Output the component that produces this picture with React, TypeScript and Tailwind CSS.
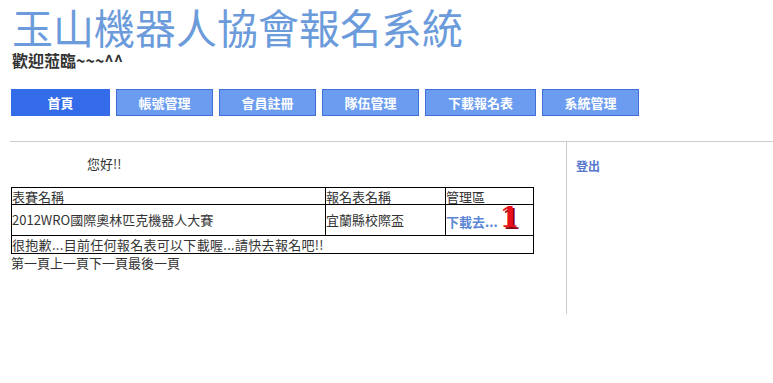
const font = "font-['Noto_Sans_CJK_TC','Liberation_Sans',sans-serif]";

const navItems = [
  { label: "首頁", w: "w-[99px]", active: true },
  { label: "帳號管理", w: "w-[97px]" },
  { label: "會員註冊", w: "w-[97px]" },
  { label: "隊伍管理", w: "w-[97px]" },
  { label: "下載報名表", w: "w-[111px]" },
  { label: "系統管理", w: "w-[97px]" },
];

export default function App() {
  return (
    <div className={`${font} h-[383px] w-[773px] overflow-hidden bg-white text-[#222]`}>
      {/* header */}
      <div className="pl-[12px] pt-[2px]">
        <h1 className="h-[48px] text-[41px] leading-[48px] font-normal text-[#6b9bdb]">
          玉山機器人協會報名系統
        </h1>
        <p className="text-[16px] leading-[20px] font-bold text-[#333]">歡迎蒞臨~~~^^</p>
      </div>

      {/* nav */}
      <nav className="mt-[19px] flex gap-[6px] pl-[11px]">
        {navItems.map((it) => (
          <div
            key={it.label}
            className={`${it.w} flex h-[27px] items-center justify-center border text-[13px] font-bold text-white ${
              it.active ? "border-[#336be8] bg-[#336be8]" : "border-[#3f6fd8] bg-[#6b9cf0]"
            }`}
          >
            {it.label}
          </div>
        ))}
      </nav>

      {/* body */}
      <div className="mt-[25px] ml-[10px] flex border-t border-[#cccccc]">
        <div className="w-[556px] pt-[14px] pl-[1px] text-[13px]">
          <p className="pl-[76px] leading-[16px] text-[#333]">您好!!</p>
          <table className="mt-[15px] w-[523px] border-collapse border border-black text-[13px] text-[#333]">
            <tbody>
              <tr className="h-[17px]">
                <td className="w-[314px] border border-black px-0 py-0 leading-[15px]">表賽名稱</td>
                <td className="w-[120px] border border-black p-0 leading-[15px]">報名表名稱</td>
                <td className="border border-black p-0 leading-[15px]">管理區</td>
              </tr>
              <tr className="h-[31px]">
                <td className="border border-black p-0">2012WRO國際奧林匹克機器人大賽</td>
                <td className="border border-black p-0">宜蘭縣校際盃</td>
                <td className="border border-black p-0">
                  <span className="font-bold text-[#5b86d6]">下載去...</span>
                  <span className="ml-[2px] font-['DejaVu_Serif',serif] text-[28px] leading-[20px] font-black text-[#e8101c] [text-shadow:2px_2px_0_#8a0010]">
                    1
                  </span>
                </td>
              </tr>
              <tr className="h-[18px]">
                <td colSpan={3} className="border border-black p-0 leading-[16px] tracking-[0.3px]">
                  很抱歉...目前任何報名表可以下載喔...請快去報名吧!!
                </td>
              </tr>
            </tbody>
          </table>
          <p className="leading-[18px] text-[#333]">第一頁上一頁下一頁最後一頁</p>
        </div>
        <div className="h-[172px] flex-1 border-l border-[#cccccc] pt-[10px] pl-[9px]">
          <a className="text-[12px] leading-[16px] font-bold text-[#5577cc]">登出</a>
        </div>
      </div>
    </div>
  );
}
